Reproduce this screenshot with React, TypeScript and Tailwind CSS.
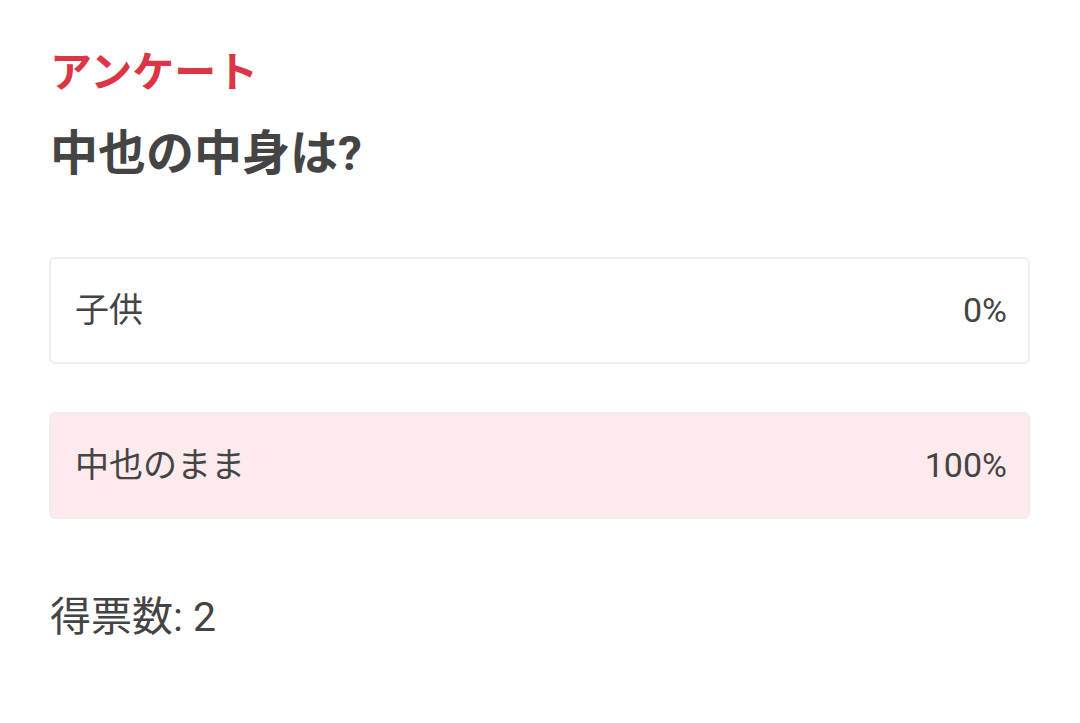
import React from 'react';

const options = [
  { label: '子供', percent: 0 },
  { label: '中也のまま', percent: 100 },
];

export default function App() {
  return (
    <div
      className="min-h-screen bg-white px-[50px] pt-[43px] text-[#444]"
      style={{ fontFamily: 'Roboto, "Noto Sans CJK JP", sans-serif' }}
    >
      <div className="text-[42px] font-bold leading-[60px] text-[#dc3545]">アンケート</div>
      <h1 className="mt-[21px] text-[48px] font-bold leading-[60px] text-[#444]">中也の中身は?</h1>
      <div className="mt-[73px] flex flex-col gap-[48px]">
        {options.map((o) => (
          <div
            key={o.label}
            className={
              'flex h-[107px] -ml-[1px] items-center justify-between rounded-[6px] border-2 border-[#eeeeee] pl-[24px] pr-[21px] text-[34px] ' +
              (o.percent === 100 ? 'bg-[#fdeaec]' : 'bg-white')
            }
          >
            <span>{o.label}</span>
            <span>{o.percent}%</span>
          </div>
        ))}
      </div>
      <div className="mt-[73px] text-[41px] leading-[50px]">得票数: 2</div>
    </div>
  );
}
